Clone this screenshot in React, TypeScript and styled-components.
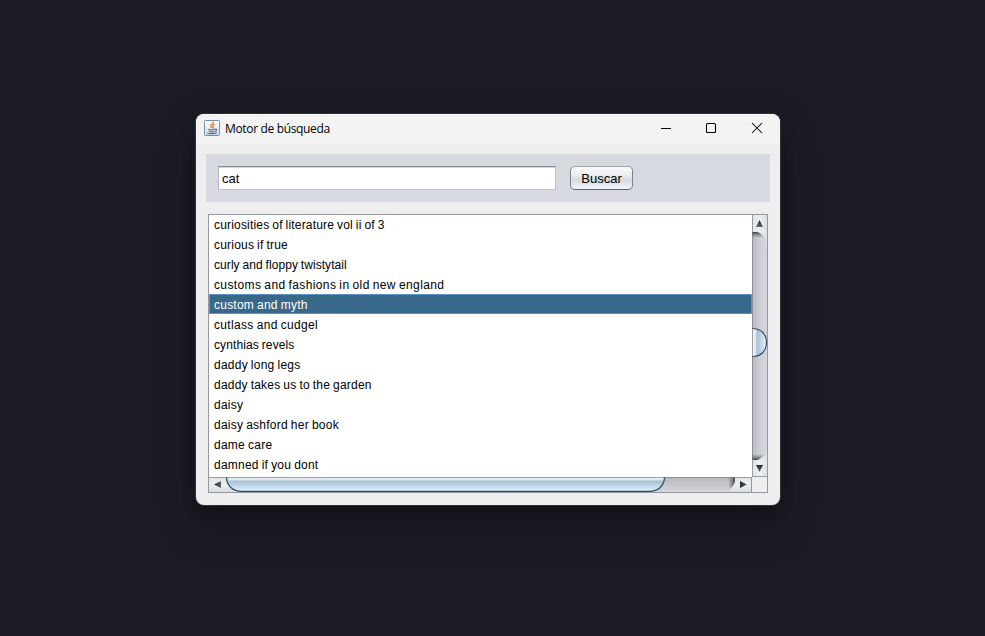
import React from "react";
import styled, { createGlobalStyle } from "styled-components";

const Global = createGlobalStyle`
  html, body { margin: 0; padding: 0; }
  body { background: #1c1c26; overflow: hidden; }
  * { box-sizing: border-box; }
`;

const Desktop = styled.main`
  width: 985px;
  height: 636px;
  padding: 114px 0 0 196px;
  background: #1c1c26;
  font: 12px "Liberation Sans", Arial, sans-serif;
  color: #000;
`;

const Window = styled.section`
  width: 584px;
  height: 391px;
  border-radius: 8px;
  background: #eeeeee;
  overflow: hidden;
  box-shadow: 0 0 0 1px #33313a, 0 18px 38px rgba(0, 0, 0, 0.36), 0 2px 14px rgba(0, 0, 0, 0.2);
`;

const TitleBar = styled.header`
  height: 30px;
  display: flex;
  align-items: center;
  padding: 0 0 2px 8px;
  background: #f3f3f3;
`;

const Title = styled.h1`
  flex: 1;
  margin: 2px 0 0 5px;
  font: 400 12px/30px "Open Sans", "Noto Sans", sans-serif;
  letter-spacing: -0.34px;
`;

const Controls = styled.div`
  display: flex;
  height: 28px;
`;

const Caption = styled.div`
  width: 46px;
  height: 28px;
  display: grid;
  place-items: center;
  svg { display: block; }
`;

const SearchBar = styled.div`
  height: 48px;
  margin: 10px 10px 0;
  padding: 12px;
  display: flex;
  gap: 14px;
  background: #d6d9e0;
`;

const Field = styled.div`
  width: 338px;
  height: 24px;
  padding-left: 3px;
  font-size: 13px;
  line-height: 23px;
  background: #fff;
  border: 1px solid #c0c1c5;
  border-top-color: #8d8e92;
  border-left-color: #b5b6ba;
  box-shadow: inset 0 1px 0 #d2d3d5;
`;

const Button = styled.button`
  width: 63px;
  height: 24px;
  padding: 2px 0 0;
  font: 13px/20px "Liberation Sans", Arial, sans-serif;
  color: #000;
  border: 1px solid #7b7f86;
  border-top-color: #a1a4a9;
  border-bottom-color: #5c6168;
  border-radius: 5px;
  background: linear-gradient(#fbfbfc 0%, #eaecef 38%, #d6d9df 58%, #e2e5eb 78%, #f3f6fc 100%);
`;

const ScrollPane = styled.div`
  width: 560px;
  height: 279px;
  margin: 12px 0 0 12px;
  display: grid;
  grid-template-columns: 543px 15px;
  grid-template-rows: 262px 15px;
  border: 1px solid #9297a1;
`;

const List = styled.ul`
  margin: 0;
  padding: 0;
  list-style: none;
  background: #fff;
  overflow: hidden;
`;

const Item = styled.li<{ $selected: boolean; $spacing: number }>`
  height: 20px;
  padding: 1px 0 0 4px;
  line-height: 19px;
  white-space: pre;
  letter-spacing: ${(p) => p.$spacing}px;
  word-spacing: -0.6px;
  border: 1px solid ${(p) => (p.$selected ? "#5f93c1" : "transparent")};
  color: ${(p) => (p.$selected ? "#fff" : "#000")};
  background: ${(p) => (p.$selected ? "#39698a" : "transparent")};
  &:first-child { margin-top: -1px; }
`;

const Corner = styled.div`
  background: #eeeeee;
  border-left: 1px solid #9297a1;
  margin-left: -1px;
`;

const Bar = styled.svg`
  display: block;
`;

const rows: [string, number][] = [
  ["curiosities of literature vol ii of 3", 0.185],
  ["curious if true", 0.21],
  ["curly and floppy twistytail", 0.07],
  ["customs and fashions in old new england", 0.37],
  ["custom and myth", 0.23],
  ["cutlass and cudgel", 0.32],
  ["cynthias revels", 0.11],
  ["daddy long legs", 0.24],
  ["daddy takes us to the garden", 0.21],
  ["daisy", 0.22],
  ["daisy ashford her book", 0.24],
  ["dame care", 0.26],
  ["damned if you dont", 0.23],
];

const JavaIcon = () => (
  <svg width="16" height="16" viewBox="0 0 16 16">
    <defs>
      <linearGradient id="java" x2="0" y2="1">
        <stop offset="0" stopColor="#fff" />
        <stop offset="1" stopColor="#cfdbe5" />
      </linearGradient>
    </defs>
    <rect x=".5" y=".5" width="15" height="15" rx="1" fill="url(#java)" stroke="#7392aa" />
    <path d="M9.4 1.6c.8 1.8-3.4 2.7-2.6 4.6.3.8 1.1 1.2 1.1 2.1M10.9 4.1c-1.8.8-2.6 1.7-1.8 2.7.4.6.1 1.2-.4 1.6" fill="none" stroke="#e8832c" strokeWidth="1.35" />
    <path d="M4 9.3c1.6.7 4.8.7 6.7 0M4.9 11.2c1.4.6 4 .6 5.4 0M11 9.3c2.4-.5 1.9 1.5.1 2M3.2 13c2.2 1.1 7.5.8 9.6-.3" fill="none" stroke="#4d7799" strokeWidth="1.2" />
  </svg>
);

const VerticalBar = () => (
  <Bar width="15" height="262" viewBox="0 0 15 262">
    <defs>
      <linearGradient id="vtrack">
        <stop offset="0" stopColor="#b9bac0" />
        <stop offset=".5" stopColor="#cdced3" />
        <stop offset="1" stopColor="#d6d7dc" />
      </linearGradient>
      <linearGradient id="vbutton">
        <stop offset="0" stopColor="#dfe2e5" />
        <stop offset=".5" stopColor="#edf0f2" />
        <stop offset="1" stopColor="#dbe0e3" />
      </linearGradient>
      <linearGradient id="vthumb">
        <stop offset="0" stopColor="#c8dae7" />
        <stop offset=".13" stopColor="#f0f5f8" />
        <stop offset=".3" stopColor="#dfeaf2" />
        <stop offset=".38" stopColor="#a9c0d3" />
        <stop offset="1" stopColor="#e2f4ff" />
      </linearGradient>
      <linearGradient id="vtop" x2="0" y2="1">
        <stop offset="0" stopColor="#3f4043" />
        <stop offset="1" stopColor="#77787d" stopOpacity="0" />
      </linearGradient>
      <linearGradient id="vbottom" x2="0" y2="1">
        <stop offset="0" stopColor="#77787d" stopOpacity="0" />
        <stop offset="1" stopColor="#3f4043" />
      </linearGradient>
      <linearGradient id="varrow" x2="0" y2="1">
        <stop offset="0" stopColor="#24262a" />
        <stop offset="1" stopColor="#62666b" />
      </linearGradient>
    </defs>
    <rect width="15" height="262" fill="url(#vbutton)" />
    <path d="M0 17H5Q12 18 15 26V237Q12 244 5 245H0Z" fill="url(#vtrack)" />
    <path d="M0 17H5Q9 18 12 23H0Z" fill="url(#vtop)" />
    <path d="M0 245H5Q9 244 12 239H0Z" fill="url(#vbottom)" />
    <path d="M-1 113.5H1.5C9 114 14.5 119 14.5 127.5S9 141 1.5 141.5H-1Z" fill="url(#vthumb)" stroke="#344e61" strokeWidth="1.2" />
    <path d="M.5 0V262" stroke="#73777e" strokeOpacity=".65" />
    <path d="M1 261.5H15" stroke="#9ba0a8" />
    <path d="M4 12 7.5 5 11 12Z" fill="url(#varrow)" />
    <path d="M4 250H11L7.5 257Z" fill="url(#varrow)" />
  </Bar>
);

const HorizontalBar = () => (
  <Bar width="543" height="15" viewBox="0 0 543 15">
    <defs>
      <linearGradient id="htrack" x2="0" y2="1">
        <stop offset="0" stopColor="#b7b8be" />
        <stop offset="1" stopColor="#d5d6db" />
      </linearGradient>
      <linearGradient id="hbutton" x2="0" y2="1">
        <stop offset="0" stopColor="#dfe2e5" />
        <stop offset=".5" stopColor="#edf0f2" />
        <stop offset="1" stopColor="#d9dde0" />
      </linearGradient>
      <linearGradient id="hthumb" x2="0" y2="1">
        <stop offset="0" stopColor="#f4f8fa" />
        <stop offset=".24" stopColor="#dce6ee" />
        <stop offset=".34" stopColor="#a9c0d4" />
        <stop offset="1" stopColor="#e0f4ff" />
      </linearGradient>
      <linearGradient id="hend">
        <stop offset="0" stopColor="#77787d" stopOpacity="0" />
        <stop offset="1" stopColor="#3f4043" />
      </linearGradient>
      <linearGradient id="harrow">
        <stop offset="0" stopColor="#24262a" />
        <stop offset="1" stopColor="#62666b" />
      </linearGradient>
    </defs>
    <rect width="543" height="15" fill="url(#hbutton)" />
    <path d="M17 0H526V4Q525 11 518 15H30Q18 9 17 0Z" fill="url(#htrack)" />
    <path d="M519 0H526V4Q525 9 520 12Z" fill="url(#hend)" />
    <path d="M17.5 -1V1C18 9 24 14.3 33 14.3H440C449 14.3 455 9 455.5 1V-1Z" fill="url(#hthumb)" stroke="#344e61" strokeWidth="1.3" />
    <path d="M0 .5H543" stroke="#73777e" strokeOpacity=".65" />
    <path d="M12 4V11L5 7.5Z" fill="url(#harrow)" />
    <path d="M531 4V11L538 7.5Z" fill="url(#harrow)" />
  </Bar>
);

export default function App() {
  return (
    <>
      <Global />
      <Desktop>
        <Window>
          <TitleBar>
            <JavaIcon />
            <Title>Motor de búsqueda</Title>
            <Controls>
              <Caption>
                <svg width="12" height="12"><path d="M2 6.5H12" stroke="#000" /></svg>
              </Caption>
              <Caption>
                <svg width="12" height="12"><rect x="1.5" y="1.5" width="9" height="9" rx="1" fill="none" stroke="#000" strokeWidth="1.1" /></svg>
              </Caption>
              <Caption>
                <svg width="12" height="12"><path d="M1 1 11 11M11 1 1 11" stroke="#000" strokeWidth="1.05" /></svg>
              </Caption>
            </Controls>
          </TitleBar>
          <SearchBar>
            <Field>cat</Field>
            <Button>Buscar</Button>
          </SearchBar>
          <ScrollPane>
            <List>
              {rows.map(([text, spacing]) => (
                <Item key={text} $selected={text === "custom and myth"} $spacing={spacing}>{text}</Item>
              ))}
            </List>
            <VerticalBar />
            <HorizontalBar />
            <Corner />
          </ScrollPane>
        </Window>
      </Desktop>
    </>
  );
}
